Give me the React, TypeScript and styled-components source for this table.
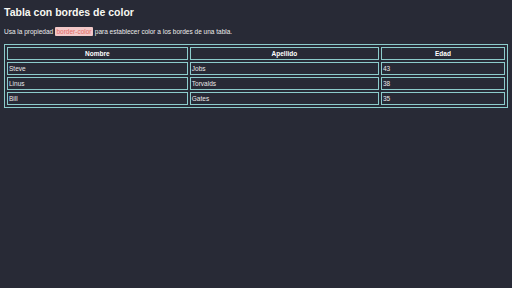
import React from "react";
import styled, { createGlobalStyle } from "styled-components";

const Global = createGlobalStyle`
  html, body { margin: 0; padding: 0; background: #282a36; }
  body { font-family: "Liberation Sans", Arial, sans-serif; color: #f8f8f2; }
`;

const Page = styled.div`
  padding: 4px;
`;

const Title = styled.h2`
  margin: 1px 0 8px;
  font-size: 10.5px;
  font-weight: bold;
  line-height: 14px;
  color: #f8f8f2;
`;

const Intro = styled.p`
  margin: 0 0 7px;
  font-size: 6.5px;
  line-height: 10px;
  color: #ececec;
`;

const Code = styled.code`
  font-family: "Liberation Sans", Arial, sans-serif;
  background: #f2c8c8;
  color: #e46a66;
  padding: 1px 1.5px;
  border-radius: 1px;
  font-size: 6.5px;
`;

const Table = styled.table`
  width: 100%;
  border: 1px solid #8ccccc;
  border-spacing: 2px;
  font-size: 6.5px;
`;

const Th = styled.th<{ $w?: string }>`
  border: 1px solid #8ccccc;
  padding: 2px 1px;
  font-weight: bold;
  line-height: 7px;
  text-align: center;
  color: #ffffff;
  width: ${(p) => p.$w ?? "auto"};
`;

const Td = styled.td`
  border: 1px solid #8ccccc;
  padding: 2px 1px;
  line-height: 7px;
  text-align: left;
  color: #e8e8e8;
`;

const rows = [
  ["Steve", "Jobs", "43"],
  ["Linus", "Torvalds", "38"],
  ["Bill", "Gates", "35"],
];

export default function App() {
  return (
    <Page>
      <Global />
      <Title>Tabla con bordes de color</Title>
      <Intro>
        Usa la propiedad <Code>border-color</Code> para establecer color a los bordes de una tabla.
      </Intro>
      <Table>
        <thead>
          <tr>
            <Th $w="36.6%">Nombre</Th>
            <Th $w="38.3%">Apellido</Th>
            <Th>Edad</Th>
          </tr>
        </thead>
        <tbody>
          {rows.map((r) => (
            <tr key={r[0]}>
              {r.map((c, i) => (
                <Td key={i}>{c}</Td>
              ))}
            </tr>
          ))}
        </tbody>
      </Table>
    </Page>
  );
}
